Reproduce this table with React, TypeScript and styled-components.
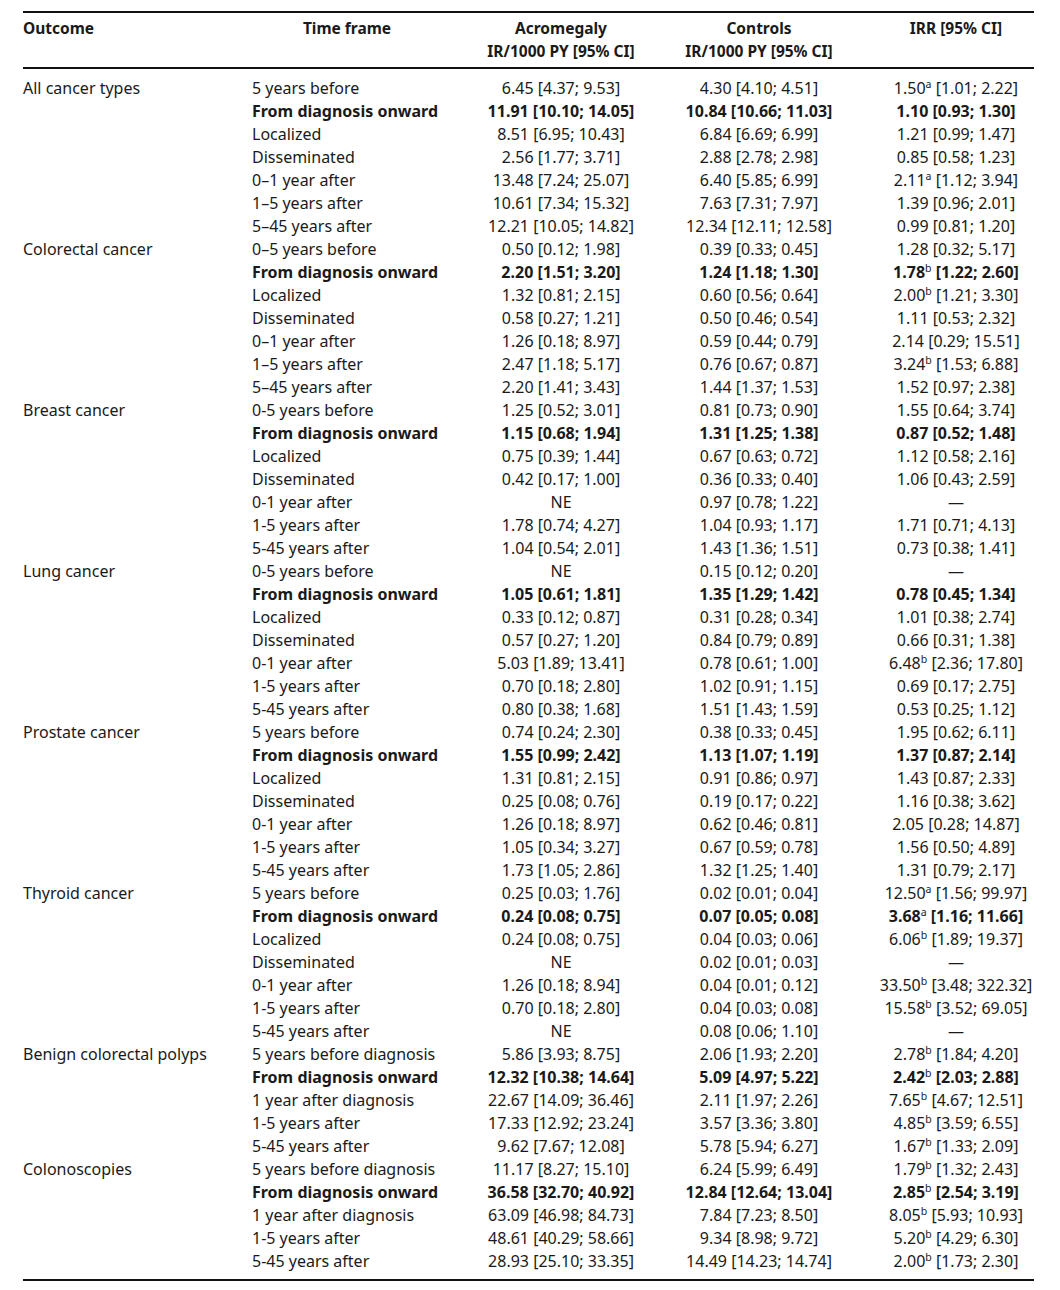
import React from "react";
import styled, { createGlobalStyle } from "styled-components";

const GlobalStyle = createGlobalStyle`
    html, body {
        margin: 0;
        padding: 0;
        background: #ffffff;
    }
    body {
        font-family: "Noto Sans", "Open Sans", sans-serif;
        color: #1a1a1a;
    }
`;

type Row = {
    time: string;
    acro: string;
    ctrl: string;
    irr: string;
    sup?: "a" | "b";
    bold?: boolean;
};

type Group = {
    outcome: string;
    rows: Row[];
};

// irr is split as "value|rest" so the superscript can sit after the value
const groups: Group[] = [
    {
        outcome: "All cancer types",
        rows: [
            { time: "5 years before", acro: "6.45 [4.37; 9.53]", ctrl: "4.30 [4.10; 4.51]", irr: "1.50|[1.01; 2.22]", sup: "a" },
            { time: "From diagnosis onward", acro: "11.91 [10.10; 14.05]", ctrl: "10.84 [10.66; 11.03]", irr: "1.10|[0.93; 1.30]", bold: true },
            { time: "Localized", acro: "8.51 [6.95; 10.43]", ctrl: "6.84 [6.69; 6.99]", irr: "1.21|[0.99; 1.47]" },
            { time: "Disseminated", acro: "2.56 [1.77; 3.71]", ctrl: "2.88 [2.78; 2.98]", irr: "0.85|[0.58; 1.23]" },
            { time: "0–1 year after", acro: "13.48 [7.24; 25.07]", ctrl: "6.40 [5.85; 6.99]", irr: "2.11|[1.12; 3.94]", sup: "a" },
            { time: "1–5 years after", acro: "10.61 [7.34; 15.32]", ctrl: "7.63 [7.31; 7.97]", irr: "1.39|[0.96; 2.01]" },
            { time: "5–45 years after", acro: "12.21 [10.05; 14.82]", ctrl: "12.34 [12.11; 12.58]", irr: "0.99|[0.81; 1.20]" },
        ],
    },
    {
        outcome: "Colorectal cancer",
        rows: [
            { time: "0–5 years before", acro: "0.50 [0.12; 1.98]", ctrl: "0.39 [0.33; 0.45]", irr: "1.28|[0.32; 5.17]" },
            { time: "From diagnosis onward", acro: "2.20 [1.51; 3.20]", ctrl: "1.24 [1.18; 1.30]", irr: "1.78|[1.22; 2.60]", sup: "b", bold: true },
            { time: "Localized", acro: "1.32 [0.81; 2.15]", ctrl: "0.60 [0.56; 0.64]", irr: "2.00|[1.21; 3.30]", sup: "b" },
            { time: "Disseminated", acro: "0.58 [0.27; 1.21]", ctrl: "0.50 [0.46; 0.54]", irr: "1.11|[0.53; 2.32]" },
            { time: "0–1 year after", acro: "1.26 [0.18; 8.97]", ctrl: "0.59 [0.44; 0.79]", irr: "2.14|[0.29; 15.51]" },
            { time: "1–5 years after", acro: "2.47 [1.18; 5.17]", ctrl: "0.76 [0.67; 0.87]", irr: "3.24|[1.53; 6.88]", sup: "b" },
            { time: "5–45 years after", acro: "2.20 [1.41; 3.43]", ctrl: "1.44 [1.37; 1.53]", irr: "1.52|[0.97; 2.38]" },
        ],
    },
    {
        outcome: "Breast cancer",
        rows: [
            { time: "0-5 years before", acro: "1.25 [0.52; 3.01]", ctrl: "0.81 [0.73; 0.90]", irr: "1.55|[0.64; 3.74]" },
            { time: "From diagnosis onward", acro: "1.15 [0.68; 1.94]", ctrl: "1.31 [1.25; 1.38]", irr: "0.87|[0.52; 1.48]", bold: true },
            { time: "Localized", acro: "0.75 [0.39; 1.44]", ctrl: "0.67 [0.63; 0.72]", irr: "1.12|[0.58; 2.16]" },
            { time: "Disseminated", acro: "0.42 [0.17; 1.00]", ctrl: "0.36 [0.33; 0.40]", irr: "1.06|[0.43; 2.59]" },
            { time: "0-1 year after", acro: "NE", ctrl: "0.97 [0.78; 1.22]", irr: "—" },
            { time: "1-5 years after", acro: "1.78 [0.74; 4.27]", ctrl: "1.04 [0.93; 1.17]", irr: "1.71|[0.71; 4.13]" },
            { time: "5-45 years after", acro: "1.04 [0.54; 2.01]", ctrl: "1.43 [1.36; 1.51]", irr: "0.73|[0.38; 1.41]" },
        ],
    },
    {
        outcome: "Lung cancer",
        rows: [
            { time: "0-5 years before", acro: "NE", ctrl: "0.15 [0.12; 0.20]", irr: "—" },
            { time: "From diagnosis onward", acro: "1.05 [0.61; 1.81]", ctrl: "1.35 [1.29; 1.42]", irr: "0.78|[0.45; 1.34]", bold: true },
            { time: "Localized", acro: "0.33 [0.12; 0.87]", ctrl: "0.31 [0.28; 0.34]", irr: "1.01|[0.38; 2.74]" },
            { time: "Disseminated", acro: "0.57 [0.27; 1.20]", ctrl: "0.84 [0.79; 0.89]", irr: "0.66|[0.31; 1.38]" },
            { time: "0-1 year after", acro: "5.03 [1.89; 13.41]", ctrl: "0.78 [0.61; 1.00]", irr: "6.48|[2.36; 17.80]", sup: "b" },
            { time: "1-5 years after", acro: "0.70 [0.18; 2.80]", ctrl: "1.02 [0.91; 1.15]", irr: "0.69|[0.17; 2.75]" },
            { time: "5-45 years after", acro: "0.80 [0.38; 1.68]", ctrl: "1.51 [1.43; 1.59]", irr: "0.53|[0.25; 1.12]" },
        ],
    },
    {
        outcome: "Prostate cancer",
        rows: [
            { time: "5 years before", acro: "0.74 [0.24; 2.30]", ctrl: "0.38 [0.33; 0.45]", irr: "1.95|[0.62; 6.11]" },
            { time: "From diagnosis onward", acro: "1.55 [0.99; 2.42]", ctrl: "1.13 [1.07; 1.19]", irr: "1.37|[0.87; 2.14]", bold: true },
            { time: "Localized", acro: "1.31 [0.81; 2.15]", ctrl: "0.91 [0.86; 0.97]", irr: "1.43|[0.87; 2.33]" },
            { time: "Disseminated", acro: "0.25 [0.08; 0.76]", ctrl: "0.19 [0.17; 0.22]", irr: "1.16|[0.38; 3.62]" },
            { time: "0-1 year after", acro: "1.26 [0.18; 8.97]", ctrl: "0.62 [0.46; 0.81]", irr: "2.05|[0.28; 14.87]" },
            { time: "1-5 years after", acro: "1.05 [0.34; 3.27]", ctrl: "0.67 [0.59; 0.78]", irr: "1.56|[0.50; 4.89]" },
            { time: "5-45 years after", acro: "1.73 [1.05; 2.86]", ctrl: "1.32 [1.25; 1.40]", irr: "1.31|[0.79; 2.17]" },
        ],
    },
    {
        outcome: "Thyroid cancer",
        rows: [
            { time: "5 years before", acro: "0.25 [0.03; 1.76]", ctrl: "0.02 [0.01; 0.04]", irr: "12.50|[1.56; 99.97]", sup: "a" },
            { time: "From diagnosis onward", acro: "0.24 [0.08; 0.75]", ctrl: "0.07 [0.05; 0.08]", irr: "3.68|[1.16; 11.66]", sup: "a", bold: true },
            { time: "Localized", acro: "0.24 [0.08; 0.75]", ctrl: "0.04 [0.03; 0.06]", irr: "6.06|[1.89; 19.37]", sup: "b" },
            { time: "Disseminated", acro: "NE", ctrl: "0.02 [0.01; 0.03]", irr: "—" },
            { time: "0-1 year after", acro: "1.26 [0.18; 8.94]", ctrl: "0.04 [0.01; 0.12]", irr: "33.50|[3.48; 322.32]", sup: "b" },
            { time: "1-5 years after", acro: "0.70 [0.18; 2.80]", ctrl: "0.04 [0.03; 0.08]", irr: "15.58|[3.52; 69.05]", sup: "b" },
            { time: "5-45 years after", acro: "NE", ctrl: "0.08 [0.06; 1.10]", irr: "—" },
        ],
    },
    {
        outcome: "Benign colorectal polyps",
        rows: [
            { time: "5 years before diagnosis", acro: "5.86 [3.93; 8.75]", ctrl: "2.06 [1.93; 2.20]", irr: "2.78|[1.84; 4.20]", sup: "b" },
            { time: "From diagnosis onward", acro: "12.32 [10.38; 14.64]", ctrl: "5.09 [4.97; 5.22]", irr: "2.42|[2.03; 2.88]", sup: "b", bold: true },
            { time: "1 year after diagnosis", acro: "22.67 [14.09; 36.46]", ctrl: "2.11 [1.97; 2.26]", irr: "7.65|[4.67; 12.51]", sup: "b" },
            { time: "1-5 years after", acro: "17.33 [12.92; 23.24]", ctrl: "3.57 [3.36; 3.80]", irr: "4.85|[3.59; 6.55]", sup: "b" },
            { time: "5-45 years after", acro: "9.62 [7.67; 12.08]", ctrl: "5.78 [5.94; 6.27]", irr: "1.67|[1.33; 2.09]", sup: "b" },
        ],
    },
    {
        outcome: "Colonoscopies",
        rows: [
            { time: "5 years before diagnosis", acro: "11.17 [8.27; 15.10]", ctrl: "6.24 [5.99; 6.49]", irr: "1.79|[1.32; 2.43]", sup: "b" },
            { time: "From diagnosis onward", acro: "36.58 [32.70; 40.92]", ctrl: "12.84 [12.64; 13.04]", irr: "2.85|[2.54; 3.19]", sup: "b", bold: true },
            { time: "1 year after diagnosis", acro: "63.09 [46.98; 84.73]", ctrl: "7.84 [7.23; 8.50]", irr: "8.05|[5.93; 10.93]", sup: "b" },
            { time: "1-5 years after", acro: "48.61 [40.29; 58.66]", ctrl: "9.34 [8.98; 9.72]", irr: "5.20|[4.29; 6.30]", sup: "b" },
            { time: "5-45 years after", acro: "28.93 [25.10; 33.35]", ctrl: "14.49 [14.23; 14.74]", irr: "2.00|[1.73; 2.30]", sup: "b" },
        ],
    },
];

const Page = styled.div`
    width: 1060px;
    padding: 11px 26px 0 23px;
    box-sizing: border-box;
`;

const Table = styled.div`
    width: 1011px;
    border-top: 2px solid #111;
    border-bottom: 2px solid #111;
    font-size: 16px;
`;

const columns = "229px 190px 40px 158px 238px 156px";

const HeadRow = styled.div`
    display: grid;
    grid-template-columns: ${columns};
    padding: 4px 0 4px;
    border-bottom: 2px solid #111;
    font-weight: 700;
    font-size: 15.5px;
    line-height: 23px;
`;

const HeadCell = styled.div<{ $center?: boolean }>`
    display: flex;
    flex-direction: column;
    align-items: ${(p) => (p.$center ? "center" : "flex-start")};
    white-space: nowrap;
`;

const Body = styled.div`
    padding: 8px 0 6px;
`;

const Row = styled.div<{ $bold?: boolean }>`
    display: grid;
    grid-template-columns: ${columns};
    height: 23px;
    line-height: 23px;
    font-weight: ${(p) => (p.$bold ? 700 : 400)};
`;

const Cell = styled.div`
    white-space: nowrap;
`;

const OutcomeCell = styled(Cell)`
    font-weight: 400;
`;

const NumCell = styled.div`
    display: flex;
    justify-content: center;
    white-space: nowrap;
`;

const Sup = styled.sup`
    font-size: 10.5px;
    line-height: 0;
    vertical-align: 6px;
    font-weight: 400;
`;

const Irr = ({ value, sup }: { value: string; sup?: string }) => {
    if (!value.includes("|")) return <NumCell>{value}</NumCell>;
    const [num, rest] = value.split("|");
    return (
        <NumCell>
            <span>
                {num}
                {sup && <Sup>{sup}</Sup>} {rest}
            </span>
        </NumCell>
    );
};

const App = () => {
    return (
        <>
            <GlobalStyle />
            <Page>
                <Table>
                    <HeadRow>
                        <HeadCell>Outcome</HeadCell>
                        <HeadCell $center>Time frame</HeadCell>
                        <div />
                        <HeadCell $center>
                            <span>Acromegaly</span>
                            <span>IR/1000 PY [95% CI]</span>
                        </HeadCell>
                        <HeadCell $center>
                            <span>Controls</span>
                            <span>IR/1000 PY [95% CI]</span>
                        </HeadCell>
                        <HeadCell $center>IRR [95% CI]</HeadCell>
                    </HeadRow>
                    <Body>
                        {groups.map((g) =>
                            g.rows.map((r, i) => (
                                <Row key={g.outcome + i} $bold={r.bold}>
                                    <OutcomeCell>{i === 0 ? g.outcome : ""}</OutcomeCell>
                                    <Cell>{r.time}</Cell>
                                    <div />
                                    <NumCell>{r.acro}</NumCell>
                                    <NumCell>{r.ctrl}</NumCell>
                                    <Irr value={r.irr} sup={r.sup} />
                                </Row>
                            ))
                        )}
                    </Body>
                </Table>
            </Page>
        </>
    );
};

export default App;
